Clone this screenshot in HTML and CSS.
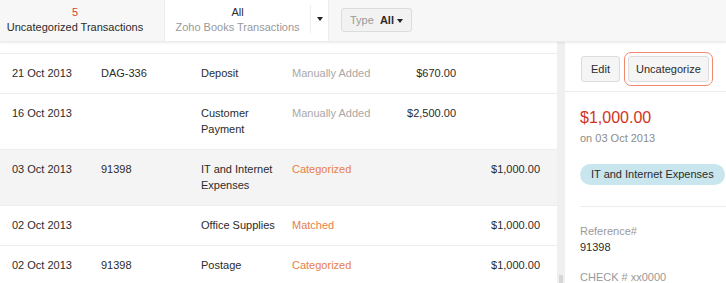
FILE: index.html
```html
<!DOCTYPE html>
<html lang="en">
<head>
  <meta charset="UTF-8">
  <title>Bank Transactions</title>
  <link rel="stylesheet" href="styles.css">
</head>
<body>
  <div class="page">
    <div class="top-bar">
      <div class="tab">
        <span class="tab-count">5</span>
        <span class="tab-label">Uncategorized Transactions</span>
      </div>
      <div class="tab tab-active">
        <div class="tab-text">
          <span class="tab-title">All</span>
          <span class="tab-sub">Zoho Books Transactions</span>
        </div>
        <div class="tab-caret"><span class="caret"></span></div>
      </div>
      <div class="filters">
        <button class="filter-btn"><span class="filter-key">Type</span> <span class="filter-val">All</span> <span class="caret"></span></button>
      </div>
    </div>

    <div class="content">
      <div class="txn-list">
        <div class="txn-row">
          <div>21 Oct 2013</div>
          <div>DAG-336</div>
          <div class="desc">Deposit</div>
          <div class="status manual">Manually Added</div>
          <div class="amt">$670.00</div>
          <div class="amt"></div>
        </div>
        <div class="txn-row">
          <div>16 Oct 2013</div>
          <div></div>
          <div class="desc">Customer Payment</div>
          <div class="status manual">Manually Added</div>
          <div class="amt">$2,500.00</div>
          <div class="amt"></div>
        </div>
        <div class="txn-row selected">
          <div>03 Oct 2013</div>
          <div>91398</div>
          <div class="desc">IT and Internet Expenses</div>
          <div class="status done">Categorized</div>
          <div class="amt"></div>
          <div class="amt">$1,000.00</div>
        </div>
        <div class="txn-row">
          <div>02 Oct 2013</div>
          <div></div>
          <div class="desc">Office Supplies</div>
          <div class="status done">Matched</div>
          <div class="amt"></div>
          <div class="amt">$1,000.00</div>
        </div>
        <div class="txn-row">
          <div>02 Oct 2013</div>
          <div>91398</div>
          <div class="desc">Postage</div>
          <div class="status done">Categorized</div>
          <div class="amt"></div>
          <div class="amt">$1,000.00</div>
        </div>
      </div>

      <div class="gutter"><div class="thumb"></div></div>

      <div class="detail">
        <div class="detail-actions">
          <button class="btn">Edit</button>
          <button class="btn btn-focus">Uncategorize</button>
        </div>
        <div class="detail-body">
          <div class="detail-amount">$1,000.00</div>
          <div class="detail-date">on 03 Oct 2013</div>
          <div class="pill">IT and Internet Expenses</div>
        </div>
        <div class="detail-meta">
          <div class="meta-label">Reference#</div>
          <div class="meta-value">91398</div>
          <div class="meta-label meta-check">CHECK # xx0000</div>
        </div>
      </div>
    </div>
  </div>
</body>
</html>
```

FILE: styles.css
```css
* { box-sizing: border-box; margin: 0; padding: 0; }
html, body {
  height: 100%;
  overflow: hidden;
}
body {
  font-family: 'Liberation Sans', Arial, sans-serif;
  font-size: 11px;
  color: #2b2b2b;
  background: #fff;
}
.page {
  height: 100%;
  display: flex;
  flex-direction: column;
}

/* top tabs */
.top-bar {
  height: 42px;
  flex-shrink: 0;
  display: flex;
  background: #f7f7f7;
  box-shadow: 0 1px 2px rgba(0,0,0,0.08);
  border-bottom: 1px solid #ececec;
  position: relative;
  z-index: 1;
}
.tab {
  width: 164px;
  display: flex;
  flex-direction: column;
  align-items: center;
  justify-content: center;
  line-height: 15px;
  padding: 0 14px 2px 0;
}
.tab-count { color: #e0412d; }
.tab-active {
  flex-direction: row;
  background: #fff;
  border-left: 1px solid #ececec;
  border-right: 1px solid #ececec;
  width: 165px;
  align-items: stretch;
  padding: 0;
}
.tab-text {
  flex: 1;
  display: flex;
  flex-direction: column;
  align-items: center;
  justify-content: center;
  padding-bottom: 2px;
}
.tab-sub { color: #999; }
.tab-caret {
  width: 18px;
  margin: 5px 0 8px;
  border-left: 1px solid #eee;
  display: flex;
  align-items: center;
  justify-content: center;
  padding-left: 1px;
}
.caret {
  display: inline-block;
  width: 0;
  height: 0;
  border-left: 3.5px solid transparent;
  border-right: 3.5px solid transparent;
  border-top: 4px solid #222;
  vertical-align: middle;
}
.filters {
  padding: 8px 12px;
}
.filter-btn {
  font: inherit;
  height: 24px;
  padding: 0 8px;
  background: #f2f2f2;
  border: 1px solid #dcdcdc;
  border-radius: 3px;
  color: #2b2b2b;
}
.filter-key { color: #999; margin-right: 3px; }
.filter-val { font-weight: bold; }

/* main area */
.content {
  flex: 1;
  display: flex;
  min-height: 0;
}
.txn-list {
  width: 557px;
  padding-top: 11px;
}
.txn-row {
  display: grid;
  grid-template-columns: 89px 100px 91px 90px 74px 84px;
  padding: 11px 0 12px 12px;
  border-top: 1px solid #ededed;
  line-height: 16px;
}
.txn-row.selected { background: #f4f4f4; }
.desc { padding-right: 6px; }
.manual { color: #a8a8a8; }
.done { color: #e8804a; }
.amt { text-align: right; }

.gutter {
  width: 8px;
  background: #f0f0f0;
  display: flex;
  flex-direction: column;
  justify-content: flex-end;
  padding: 0 2px;
}
.thumb {
  height: 8px;
  background: #d6d6d6;
}

/* detail panel */
.detail {
  flex: 1;
  min-width: 0;
}
.detail-actions {
  display: flex;
  gap: 8px;
  padding: 14px 0 9px 16px;
  border-bottom: 1px solid #ececec;
}
.btn {
  font: inherit;
  color: #2b2b2b;
  height: 26px;
  padding: 0 9px;
  background: #f5f5f5;
  border: 1px solid #dcdcdc;
  border-radius: 3px;
}
.btn-focus {
  padding: 0 7px;
  outline: 1.5px solid #f08a6e;
  outline-offset: 3px;
}
.detail-body {
  padding: 16px 0 21px 15px;
}
.detail-amount {
  color: #d0341e;
  font-size: 16px;
  line-height: 20px;
}
.detail-date {
  color: #8c8c8c;
  line-height: 16px;
  margin-top: 2px;
}
.pill {
  margin-top: 18px;
  display: inline-block;
  background: #c9e6ef;
  border-radius: 11px;
  padding: 0 11px;
  line-height: 21px;
  white-space: nowrap;
}
.detail-meta {
  margin-left: 15px;
  border-top: 1px solid #ececec;
  padding-top: 17px;
}
.meta-label {
  color: #999;
  line-height: 14px;
}
.meta-value {
  line-height: 16px;
  margin-top: 1px;
}
.meta-check {
  margin-top: 15px;
}
```
